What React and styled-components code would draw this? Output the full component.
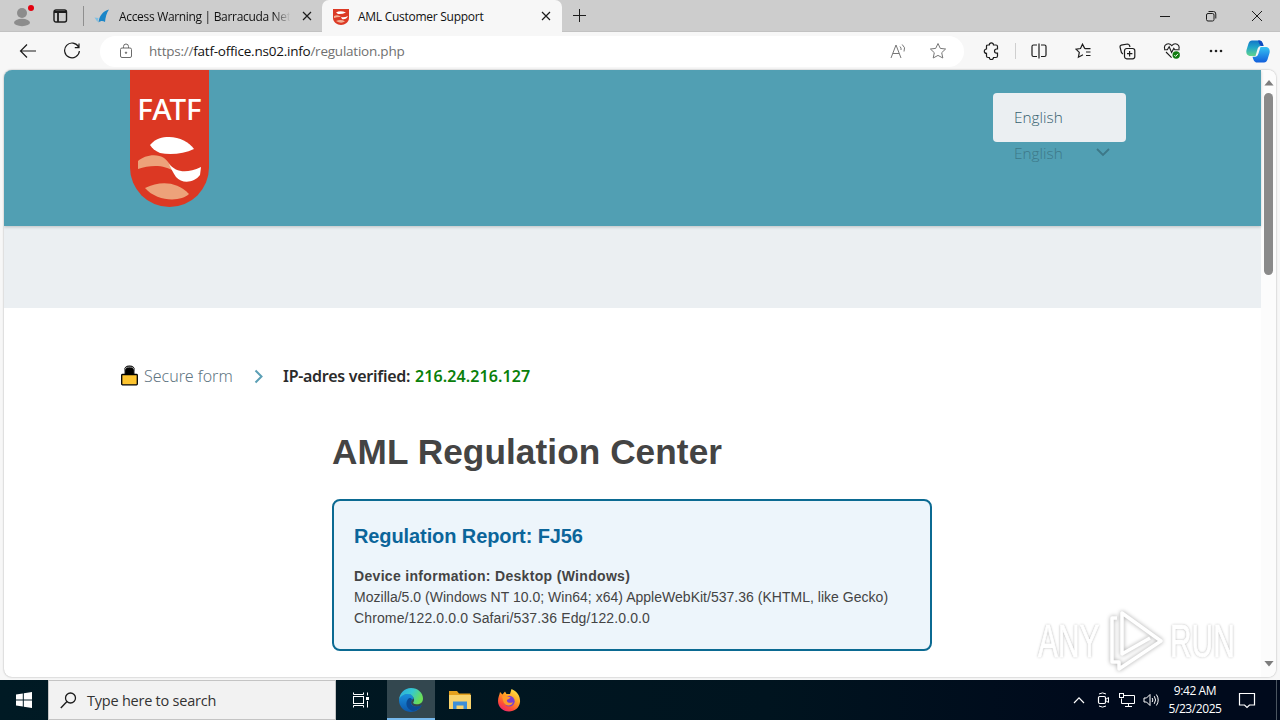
import React from "react";
import styled, { createGlobalStyle } from "styled-components";

const UI_FONT = `"Open Sans", "Noto Sans", sans-serif`;
const PAGE_FONT = `"Noto Sans", "Open Sans", sans-serif`;

function Icon({ w = 18, h = 18, children, ...rest }) {
    return (
        <StyledSvg width={w} height={h} viewBox={`0 0 ${w} ${h}`} {...rest}>
            {children}
        </StyledSvg>
    );
}

function FatfMark({ width = 64, height = 64 }) {
    return (
        <StyledSvg width={width} height={height} viewBox="0 0 64 64" stroke="none">
            <path fill="#fff" d="M12 8 C18 1 24 0 31 0 C42 0 51 5 56 12 C46 17 32 18 22 16 C17 14 14 11 12 8Z" />
            <path fill="#eda27a" d="M0 24 C6 18 19 16 26 21 C30 24 34 30 37 35 C26 27 12 28 0 32Z" />
            <path fill="#fff" d="M31 27 C38 35 48 37 63 30 L62 38 C56 46 44 47 38 40 C35 36 33 31 31 27Z" />
            <path fill="#eda27a" d="M7 51 C22 44 38 44 51 57 C43 65 19 65 7 51Z" />
        </StyledSvg>
    );
}

function CloseIcon() {
    return (
        <Icon w={10} h={10}>
            <path d="M1 1 L9 9 M9 1 L1 9" strokeWidth="1.2" />
        </Icon>
    );
}

function TabBar() {
    return (
        <StyledTabBar>
            <ProfileArea>
                <Icon w={20} h={24} stroke="none">
                    <circle cx="8" cy="9" r="5" fill="#8c8c8c" />
                    <ellipse cx="8" cy="18.5" rx="8" ry="3.7" fill="#8c8c8c" />
                    <circle cx="17" cy="4" r="3" fill="#e3000f" />
                </Icon>
            </ProfileArea>
            <WorkspaceArea>
                <Icon w={15} h={14}>
                    <rect x="1" y="1" width="12.5" height="12" rx="2" strokeWidth="1.4" />
                    <path d="M1 3 H13.5 M5 3 V13" strokeWidth="1.8" />
                </Icon>
            </WorkspaceArea>
            <Tab $width={238}>
                <Icon w={16} h={14} stroke="none">
                    <path fill="#1b86c8" d="M4.5 13.5 C5 7 9 2 15 0.5 C12.5 4 11.5 8 11 13 C9 11.5 6.5 11.5 4.5 13.5Z" />
                    <path fill="#7fbfe2" d="M0.5 8.5 L4.5 9 L3.5 13Z" />
                </Icon>
                <TabTitle $fade $spacing="-0.32px">Access Warning | Barracuda Netw</TabTitle>
                <CloseIcon />
            </Tab>
            <Tab $active $width={240}>
                <Icon w={16} h={17} stroke="none">
                    <path fill="#dc3a26" d="M0 1 H16 V10 C16 14 12 17 8 17 S0 14 0 10Z" />
                    <path fill="#fff" d="M3 4.6 Q7 2 13 4.5 Q9 6.5 5 6Z M8 9 Q11 10 15 8 Q13 12 9 11Z" />
                    <path fill="#f3b196" d="M1 8 Q5 6 8 9 Q5 8.5 1 10Z M3 13 Q8 11 12 13.5 Q8 16 3 13Z" />
                </Icon>
                <TabTitle $spacing="-0.27px">AML Customer Support</TabTitle>
                <CloseIcon />
            </Tab>
            <NewTab>
                <Icon w={15} h={15}>
                    <path d="M7.5 1 V14 M1 7.5 H14" />
                </Icon>
            </NewTab>
            <WindowButtons>
                <Icon w={12} h={12}>
                    <path d="M1 6.5 H11" />
                </Icon>
                <Icon w={12} h={12}>
                    <rect x="1.5" y="3.5" width="7.5" height="7.5" rx="1.5" />
                    <path d="M3.5 1.5 H8.5 Q10.8 1.5 10.8 4 V8.5" />
                </Icon>
                <Icon w={12} h={12}>
                    <path d="M1 1 L11 11 M11 1 L1 11" />
                </Icon>
            </WindowButtons>
        </StyledTabBar>
    );
}

function Toolbar() {
    return (
        <StyledToolbar>
            <ToolButton $width={44}>
                <Icon w={18} h={16}>
                    <path d="M17 8 H1.5 M8 1.5 L1.5 8 L8 14.5" strokeWidth="1.2" />
                </Icon>
            </ToolButton>
            <ToolButton $width={44}>
                <Icon w={18} h={18}>
                    <path d="M15.6 5 A7.4 7.4 0 1 0 16.4 9 M16 1.5 V5.6 H11.8" strokeWidth="1.2" />
                </Icon>
            </ToolButton>
            <AddressBar>
                <Icon w={14} h={16} stroke="#6b6b6b">
                    <rect x="1.5" y="5" width="11" height="9.5" rx="1.5" />
                    <path d="M4.5 5 V3.5 Q4.5 1 7 1 T9.5 3.5 V5" />
                    <circle cx="7" cy="9.7" r="0.7" fill="#6b6b6b" />
                </Icon>
                <Url>
                    https://<b>fatf-office.ns02.info</b>/regulation.php
                </Url>
                <Icon w={17} h={17} stroke="#777">
                    <path d="M1 15 L6 2 L11 15 M2.8 10.5 H9.2" />
                    <path d="M10 3.5 Q11.5 5 11 7 M12.2 1.5 Q16 4.5 14 8.5" />
                </Icon>
                <Icon w={18} h={18} stroke="#777">
                    <path d="M9 1.5 L11.3 6.4 L16.6 7 L12.7 10.7 L13.8 16 L9 13.4 L4.2 16 L5.3 10.7 L1.4 7 L6.7 6.4Z" />
                </Icon>
            </AddressBar>
            <ToolButton $width={44}>
                <Icon w={17} h={18}>
                    <path d="M4.5 3 H6.3 A2.1 2.1 0 0 1 10.5 3 H13 Q14.5 3 14.5 4.5 V7 H13.6 A2.1 2.1 0 0 0 13.6 11.2 H14.5 V14 Q14.5 15.5 13 15.5 H10.5 A2.1 2.1 0 0 1 6.3 15.5 H5 Q3.5 15.5 3.5 14 V11.4 A2.2 2.2 0 0 1 3.5 7 V4.2 Q3.5 3 4.8 3" strokeWidth="1.2" />
                </Icon>
            </ToolButton>
            <Separator />
            <ToolButton>
                <Icon w={16} h={16}>
                    <path d="M6 2 H2.5 Q1 2 1 3.5 V12 Q1 13.5 2.5 13.5 H6 M10 2 H13.5 Q15 2 15 3.5 V12 Q15 13.5 13.5 13.5 H10 M8 0.5 V15.5" strokeWidth="1.2" />
                </Icon>
            </ToolButton>
            <ToolButton>
                <Icon w={16} h={16}>
                    <path d="M9.8 5.6 L7.5 1.2 L5.5 5.5 L1 6.2 L4.3 9.4 L3.4 14.2 L8 11.8 M9.8 5.6 H15.5 M11 9 H15.5 M11 12.5 H15.5" strokeWidth="1.2" />
                </Icon>
            </ToolButton>
            <ToolButton>
                <Icon w={17} h={17}>
                    <path d="M3.8 11 L2.4 9.5 L1 4 Q0.8 2.6 2.2 2.2 L8.5 1 Q10 1 10.5 2.5 L11 4" strokeWidth="1.2" />
                    <rect x="5.5" y="5.5" width="10.3" height="10.3" rx="2.2" strokeWidth="1.2" />
                    <path d="M10.6 8 V13.4 M8 10.7 H13.4" strokeWidth="1.2" />
                </Icon>
            </ToolButton>
            <ToolButton>
                <Icon w={18} h={18}>
                    <path d="M1.8 7 C0.2 2.5 5.5 0 8.8 3.6 C12 0 17.4 2.5 15.8 7 M1 7.8 H4.3 L6.2 4.8 L8.6 10.4 L10.8 6.4 L11.8 7.8 H16.6 M3 10 L8.6 15.6" strokeWidth="1.1" />
                    <circle cx="13.2" cy="13" r="3.7" fill="#107c10" stroke="none" />
                    <path d="M11.4 13.2 L12.6 14.4 L15 11.8" stroke="#fff" />
                </Icon>
            </ToolButton>
            <ToolButton>
                <Icon w={14} h={4} stroke="none" fill="#222">
                    <circle cx="2" cy="2" r="1.3" />
                    <circle cx="7" cy="2" r="1.3" />
                    <circle cx="12" cy="2" r="1.3" />
                </Icon>
            </ToolButton>
            <ToolButton $width={41}>
                <Icon w={24} h={23} stroke="none">
                    <defs>
                        <linearGradient id="cpA" x1="0" y1="0" x2="0" y2="1">
                            <stop offset="0" stopColor="#1276c8" />
                            <stop offset="0.45" stopColor="#22a6c9" />
                            <stop offset="1" stopColor="#62d58c" />
                        </linearGradient>
                        <linearGradient id="cpB" x1="0" y1="0" x2="0" y2="1">
                            <stop offset="0" stopColor="#36c3f2" />
                            <stop offset="1" stopColor="#125fdc" />
                        </linearGradient>
                    </defs>
                    <path fill="url(#cpA)" d="M6 0.5 H14 Q16 0.8 17 4 L17.5 6 H14.5 Q12.5 6 11.7 8.5 L9.5 16 H3.5 Q-0.5 15 0.5 10 L2.5 3.5 Q3.5 0.5 6 0.5Z" />
                    <path fill="url(#cpB)" d="M18 22.5 H10 Q8 22.2 7.2 19 L6.5 16.8 H9.5 Q11.5 16.5 12.3 14 L14.5 7 H20.5 Q24.5 8 23.5 13 L21.5 19.5 Q20.5 22.5 18 22.5Z" />
                    <path fill="#1049c0" d="M12 0.5 H14 Q16 0.8 17 4 L17.5 6 H15 Q13 4 12 0.5Z" />
                </Icon>
            </ToolButton>
        </StyledToolbar>
    );
}

function SiteHeader() {
    return (
        <StyledHeader>
            <Logo>
                <LogoText>FATF</LogoText>
                <FatfMark />
            </Logo>
            <LanguagePicker>
                <LanguageBox>English</LanguageBox>
                <LanguageCurrent>
                    English
                    <Icon w={16} h={11} stroke="#3d7888">
                        <path d="M2 1 L8 7 L14 1" strokeWidth="1.8" />
                    </Icon>
                </LanguageCurrent>
            </LanguagePicker>
        </StyledHeader>
    );
}

function Steps() {
    return (
        <StyledSteps>
            <Icon w={17} h={22}>
                <path d="M4.5 9 V6 Q4.5 2 8.5 2 T12.5 6 V9" fill="#000" stroke="#000" strokeWidth="3" />
                <path d="M3.6 9 V5.8 Q3.6 2 8.5 2 T13.4 5.8 V9" stroke="#ccc" strokeWidth="0.8" />
                <rect x="0.7" y="9.5" width="15.6" height="10.3" rx="0.8" fill="#fdc42f" stroke="#000" strokeWidth="1.3" />
            </Icon>
            <StepLink>Secure form</StepLink>
            <Icon w={12} h={16} stroke="#5b9fb5">
                <path d="M2.5 2.5 L8.5 8.5 L2.5 14.5" strokeWidth="2" />
            </Icon>
            <StepCurrent>IP-adres verified:</StepCurrent>
            <IpAddress>216.24.216.127</IpAddress>
        </StyledSteps>
    );
}

function Report() {
    return (
        <StyledReport>
            <Title>AML Regulation Center</Title>
            <ReportCard>
                <ReportTitle>Regulation Report: FJ56</ReportTitle>
                <ReportLine $bold $spacing="0.32px">Device information: Desktop (Windows)</ReportLine>
                <ReportLine $spacing="0.02px">Mozilla/5.0 (Windows NT 10.0; Win64; x64) AppleWebKit/537.36 (KHTML, like Gecko)</ReportLine>
                <ReportLine $spacing="0.13px">Chrome/122.0.0.0 Safari/537.36 Edg/122.0.0.0</ReportLine>
            </ReportCard>
        </StyledReport>
    );
}

function Watermark() {
    return (
        <StyledWatermark>
            <WatermarkWord>
                <span>ANY</span>
            </WatermarkWord>
            <WatermarkLogo w={58} h={64} stroke="#fff">
                <g strokeLinejoin="round">
                    <path d="M10 9 H5 V53 H12 V60 L54 32 L15 4 V45 L43 29" strokeWidth="3.5" />
                </g>
            </WatermarkLogo>
            <WatermarkWord>
                <span>RUN</span>
            </WatermarkWord>
        </StyledWatermark>
    );
}

function ScrollBar() {
    return (
        <StyledScrollBar>
            <Icon w={10} h={6} stroke="none" fill="#7d7d7d">
                <path d="M5 0 L9.6 5.5 H0.4Z" />
            </Icon>
            <Thumb />
            <Icon w={10} h={6} stroke="none" fill="#7d7d7d">
                <path d="M5 5.5 L9.6 0 H0.4Z" />
            </Icon>
        </StyledScrollBar>
    );
}

function Taskbar() {
    return (
        <StyledTaskbar>
            <TaskButton>
                <Icon w={16} h={16} stroke="none" fill="#fff">
                    <path d="M0 2.4 L6.8 1.4 V7.5 H0Z M7.8 1.2 L16 0 V7.5 H7.8Z M0 8.5 H6.8 V14.6 L0 13.6Z M7.8 8.5 H16 V16 L7.8 14.8Z" />
                </Icon>
            </TaskButton>
            <SearchBox>
                <Icon w={17} h={17}>
                    <circle cx="10.5" cy="6" r="5" strokeWidth="1.3" />
                    <path d="M7 9.6 L0.8 16" strokeWidth="1.4" />
                </Icon>
                Type here to search
            </SearchBox>
            <TaskButton $width={51}>
                <Icon w={20} h={16} stroke="#fff">
                    <path d="M1.5 0.5 V2.5 H11.5 V0.5 M1.5 15.5 V13.5 H11.5 V15.5 M15.5 0.5 V3.5 M15.5 9 V15.5" />
                    <rect x="1.5" y="4.5" width="10" height="7" />
                    <rect x="14" y="5" width="3" height="3" fill="#fff" stroke="none" />
                </Icon>
            </TaskButton>
            <TaskButton $active>
                <Icon w={24} h={24} stroke="none">
                    <defs>
                        <linearGradient id="edA" x1="0" y1="0" x2="1" y2="0.4">
                            <stop offset="0" stopColor="#2aa8e0" />
                            <stop offset="0.55" stopColor="#35c8d0" />
                            <stop offset="1" stopColor="#6ade58" />
                        </linearGradient>
                        <linearGradient id="edB" x1="0" y1="0" x2="0" y2="1">
                            <stop offset="0" stopColor="#1a8fdc" />
                            <stop offset="1" stopColor="#0c58ac" />
                        </linearGradient>
                    </defs>
                    <path fill="url(#edB)" d="M0 12 C1 7 5 6 9 6 C13 6 15 9 14.5 11 C12 11 10 17 16 18.5 C19 19.3 21.5 18 22.7 17.3 C19.5 23.5 14 24.5 10 23.8 C4 22.8 0 18 0 12Z" />
                    <path fill="#0b4a94" d="M9 11 C5 16 9 23 15 23 C19 22.2 21.5 19.5 22.7 17.3 C15 21 9.5 16.5 13 11.5 C12.5 10 10.5 9.5 9 11Z" />
                    <path fill="url(#edA)" d="M0 12 C0.5 5 5.5 0 12 0 C19 0 24 5 24 10.5 C24 15 20.5 16.5 17.5 16.3 C14.5 16.2 14 15.2 14.2 14.5 C16.5 12 14.5 6.3 9 6 C4.5 6 1 8.5 0 12Z" />
                </Icon>
            </TaskButton>
            <TaskButton $width={49}>
                <Icon w={22} h={18} stroke="none">
                    <path fill="#e5a11d" d="M0 0 H8 L10 2.5 H21.5 V6 H0Z" />
                    <path fill="#f9d36c" d="M0 4 H22 V18 H0Z" />
                    <path fill="#3d8fd8" d="M4 18 V10.5 H18 V18 H14.5 V14.5 H7.5 V18Z" />
                </Icon>
            </TaskButton>
            <TaskButton $width={49}>
                <Icon w={24} h={24} stroke="none">
                    <defs>
                        <linearGradient id="ffA" x1="0.8" y1="0" x2="0.2" y2="1">
                            <stop offset="0" stopColor="#ffe84a" />
                            <stop offset="0.4" stopColor="#ffa022" />
                            <stop offset="0.75" stopColor="#ff4a38" />
                            <stop offset="1" stopColor="#e8207a" />
                        </linearGradient>
                    </defs>
                    <path fill="url(#ffA)" d="M3 4 L5.5 6.5 L8 3.5 L9.5 6 H13 L14.5 1 C20 3.5 23.5 8 23 14 C22.3 20 17.5 23.5 12 23.5 C6 23.5 1 19 1 13 C1 9 2.5 7.5 3 4Z" />
                    <circle cx="12.3" cy="13.2" r="5.4" fill="#7a3fd0" />
                    <path fill="#ff9a28" d="M5 8.5 C8 6.5 11 9 13.5 9.3 C13 11.3 10 11 9.8 12.5 C10 15 14 15.5 16 14 C15 18.5 8.5 19 6.5 14Z" />
                </Icon>
            </TaskButton>
            <Tray>
                <Chevron w={12} h={8} stroke="#fff">
                    <path d="M1 7 L6 1.8 L11 7" strokeWidth="1.2" />
                </Chevron>
                <Icon w={13} h={16} stroke="#fff">
                    <rect x="1.5" y="4.5" width="7" height="7" rx="1.2" strokeWidth="1.2" />
                    <path d="M8.5 7.5 L11.5 5.5 V10.5 L8.5 8.5 M2 2 Q5.5 -0.2 9 2 M2 14 Q5.5 16.2 9 14" />
                </Icon>
                <Icon w={17} h={16} stroke="#fff">
                    <path d="M5.5 3.5 H16.5 V11.5 H3.5 V6.5 M10.5 11.5 V14.5 M7 14.5 H14" />
                    <rect x="1.5" y="1.5" width="4" height="4" />
                </Icon>
                <Icon w={17} h={14} stroke="#fff">
                    <path d="M1 5 H3.5 L7 1.5 V12.5 L3.5 9 H1Z M9.2 5 Q10.5 7 9.2 9 M11.3 3.2 Q13.8 7 11.3 10.8 M13.4 1.5 Q17 7 13.4 12.5" />
                </Icon>
            </Tray>
            <Clock>
                <ClockTime>9:42 AM</ClockTime>
                <ClockTime>5/23/2025</ClockTime>
            </Clock>
            <ActionCenter>
                <Icon w={18} h={17} stroke="#fff">
                    <path d="M1.5 1.5 H16.5 V13 H11.5 L9 15.5 L6.5 13 H1.5Z" strokeWidth="1.2" />
                </Icon>
            </ActionCenter>
        </StyledTaskbar>
    );
}

function App() {
    return (
        <>
            <GlobalStyle />
            <Desktop>
                <TabBar />
                <Toolbar />
                <Viewport>
                    <Page>
                        <SiteHeader />
                        <Band />
                        <Steps />
                        <Report />
                    </Page>
                    <ScrollBar />
                </Viewport>
                <Taskbar />
                <Watermark />
            </Desktop>
        </>
    );
}

const GlobalStyle = createGlobalStyle`
  * {
    box-sizing: border-box;
  }
  body {
    margin: 0;
    overflow: hidden;
    font-family: ${UI_FONT};
  }
`

const StyledSvg = styled.svg.attrs((p) => ({ fill: p.fill || "none", stroke: p.stroke || "#1c1c1c" }))`
  display: block;
  flex: none;
`

const Desktop = styled.div`
  position: relative;
  display: flex;
  flex-flow: column;
  width: 1280px;
  height: 720px;
  overflow: hidden;
  background: #f7f7f7;
`

const StyledTabBar = styled.div`
  display: flex;
  flex: none;
  height: 32px;
  background: #cdcdcd;
  box-shadow: inset 0 -1px 0 #c2c2c2;
`

const ProfileArea = styled.div`
  width: 46px;
  padding: 4px 0 0 14px;
`

const WorkspaceArea = styled.div`
  width: 38px;
  height: 20px;
  margin-top: 6px;
  padding: 3px 0 0 7px;
  border-right: 1px solid #8f8f8f;
`

const Tab = styled.div`
  display: flex;
  align-items: center;
  gap: 9px;
  width: ${(p) => p.$width}px;
  height: 32px;
  padding: 0 ${(p) => (p.$active ? 11 : 10)}px;
  border-radius: 7px 7px 0 0;
  background: ${(p) => (p.$active ? "#f7f7f7" : "transparent")};
`

const TabTitle = styled.div`
  flex: 1;
  min-width: 0;
  margin-right: -1px;
  white-space: nowrap;
  font-size: 12px;
  letter-spacing: ${(p) => p.$spacing};
  color: #111;
  ${(p) => p.$fade && "mask-image: linear-gradient(90deg, #000 88%, transparent 98%);"}
`

const NewTab = styled.div`
  padding: 8px 0 0 10px;
`

const WindowButtons = styled.div`
  display: flex;
  align-items: center;
  gap: 34px;
  margin-left: auto;
  padding-right: 17px;
`

const StyledToolbar = styled.div`
  display: flex;
  flex: none;
  align-items: center;
  height: 38px;
  padding-left: 6px;
`

const ToolButton = styled.div`
  display: flex;
  flex: none;
  align-items: center;
  justify-content: center;
  width: ${(p) => p.$width || 44.2}px;
`

const AddressBar = styled.div`
  display: flex;
  align-items: center;
  flex: none;
  width: 864px;
  height: 31px;
  margin: 0 5px 0 6px;
  padding: 0 17px 0 19px;
  border-radius: 16px;
  background: #fff;
  gap: 22px;
`

const Url = styled.div`
  flex: 1;
  margin-left: -6px;
  font-size: 13.5px;
  letter-spacing: -0.23px;
  white-space: nowrap;
  color: #707070;

  b {
    font-weight: 400;
    color: #111;
  }
`

const Separator = styled.div`
  width: 1px;
  height: 16px;
  margin: 0 1px 0 2px;
  background: #cfcfcf;
`

const Viewport = styled.div`
  display: flex;
  flex: none;
  height: 607px;
  margin: 0 4px 3px;
  border-radius: 8px;
  overflow: hidden;
  background: #fff;
  box-shadow: 0 0 2px rgba(0, 0, 0, 0.35);
`

const Page = styled.div`
  width: 1257px;
  font-family: ${PAGE_FONT};
`

const StyledHeader = styled.div`
  position: relative;
  z-index: 1;
  display: flex;
  justify-content: space-between;
  height: 156px;
  padding: 0 135px 0 126px;
  background: #519fb3;
  box-shadow: 0 1px 3px rgba(0, 0, 0, 0.2);
`

const Logo = styled.div`
  display: flex;
  flex-flow: column;
  align-items: center;
  width: 79px;
  height: 137px;
  padding-top: 19px;
  border-radius: 0 0 40px 40px;
  background: #dc3823;
`

const LogoText = styled.div`
  margin-bottom: 8px;
  font: 500 29.5px/40px "Noto Sans", sans-serif;
  color: #fff;
`

const LanguagePicker = styled.div`
  width: 133px;
  padding-top: 23px;
  font-family: "Open Sans", sans-serif;
  font-size: 15.4px;
  font-weight: 300;
`

const LanguageBox = styled.div`
  height: 49px;
  padding-left: 21px;
  border-radius: 4px;
  line-height: 49px;
  background: #ebeff2;
  color: #35606e;
`

const LanguageCurrent = styled.div`
  display: flex;
  align-items: center;
  justify-content: space-between;
  height: 23px;
  padding: 0 15px 0 21px;
  color: #3d7888;
`

const Band = styled.div`
  height: 82px;
  background: #ebeff2;
`

const StyledSteps = styled.div`
  display: flex;
  align-items: center;
  height: 24px;
  margin: 56px 0 0 117px;
  font-size: 16px;
  white-space: nowrap;
`

const StepLink = styled.div`
  width: 89px;
  margin: 0 20px 0 6px;
  font-weight: 300;
  color: #5f7683;
`

const StepCurrent = styled.div`
  margin: 0 5px 0 18px;
  font-weight: 600;
  letter-spacing: -0.28px;
  color: #2b2b2b;
`

const IpAddress = styled.div`
  font-weight: 600;
  letter-spacing: 0.08px;
  color: #0a800a;
`

const StyledReport = styled.div`
  width: 600px;
  margin: 44px 0 0 328px;
  font-family: "Liberation Sans", sans-serif;
`

const Title = styled.div`
  font-size: 35.2px;
  font-weight: 700;
  line-height: 40px;
  letter-spacing: 0.08px;
  color: #444;
`

const ReportCard = styled.div`
  height: 152px;
  margin-top: 27px;
  padding: 20px;
  border: 2px solid #0b6a92;
  border-radius: 8px;
  background: #edf5fb;
`

const ReportTitle = styled.div`
  margin-bottom: 15px;
  font-size: 20px;
  font-weight: 700;
  line-height: 30px;
  letter-spacing: -0.1px;
  color: #0b659a;
`

const ReportLine = styled.div`
  font-size: 14px;
  font-weight: ${(p) => (p.$bold ? 700 : 400)};
  line-height: 21px;
  letter-spacing: ${(p) => p.$spacing};
  white-space: nowrap;
  color: #444;
`

const StyledScrollBar = styled.div`
  display: flex;
  flex-flow: column;
  align-items: center;
  width: 15px;
  padding: 10px 0;
  background: #fcfcfc;

  svg:last-child {
    margin-top: auto;
  }
`

const Thumb = styled.div`
  width: 9px;
  height: 182px;
  margin-top: 7px;
  border-radius: 5px;
  background: #8a8a8a;
`

const StyledTaskbar = styled.div`
  display: flex;
  flex: none;
  height: 40px;
  background: linear-gradient(90deg, #001a24, #00141f 60%, #000a1c 85%);
  color: #fff;
`

const TaskButton = styled.div`
  display: flex;
  align-items: center;
  justify-content: center;
  flex: none;
  width: ${(p) => p.$width || 48}px;
  ${(p) => p.$active && "background: #33474f; box-shadow: inset 0 -2px 0 #76b9ed;"}
`

const SearchBox = styled.div`
  display: flex;
  align-items: center;
  gap: 10px;
  flex: none;
  width: 288px;
  padding-left: 11px;
  border: 1px solid #c4c4c4;
  background: #f2f2f2;
  font-size: 14.5px;
  letter-spacing: -0.23px;
  color: #333;
`

const Tray = styled.div`
  display: flex;
  align-items: center;
  gap: 8px;
  margin-left: auto;
  padding-right: 7px;
`

const Chevron = styled(Icon)`
  margin-right: 4px;
`

const Clock = styled.div`
  display: flex;
  flex-flow: column;
  align-items: center;
  width: 56px;
  padding-top: 2px;
`

const ClockTime = styled.div`
  font-size: 12px;
  line-height: 18px;
  letter-spacing: -0.42px;
  white-space: nowrap;
`

const ActionCenter = styled.div`
  display: flex;
  align-items: center;
  justify-content: center;
  width: 54px;
  margin-right: 3px;
  padding-right: 5px;
  border-right: 1px solid #4a5560;
`

const StyledWatermark = styled.div`
  position: absolute;
  left: 1038px;
  top: 609px;
  display: flex;
  align-items: center;
  gap: 5px;
`

const WatermarkLogo = styled(Icon)`
  filter: drop-shadow(0 0 2px #a8a8a8);
`

const WatermarkWord = styled.div`
  width: 64px;
  font: 400 46px/60px "Liberation Sans", sans-serif;
  color: #fff;
  -webkit-text-stroke: 1px #fff;
  text-shadow: 0 0 3px #909090;

  span {
    display: inline-block;
    transform: scaleX(0.65);
    transform-origin: 0 0;
  }
`

export default App;
